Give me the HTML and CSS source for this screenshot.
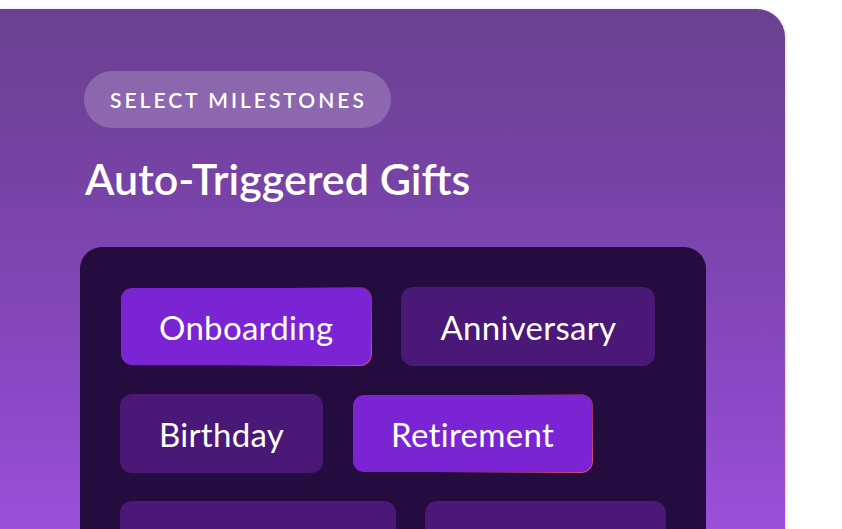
FILE: index.html
```html
<!DOCTYPE html>
<html lang="en">
<head>
<meta charset="utf-8">
<title>Auto-Triggered Gifts</title>
<link rel="stylesheet" href="styles.css">
</head>
<body>
<section class="card">
  <span class="eyebrow">SELECT MILESTONES</span>
  <h1 class="title">Auto-Triggered Gifts</h1>
  <div class="panel">
    <div class="chips">
      <button class="chip chip--on">Onboarding</button>
      <button class="chip">Anniversary</button>
    </div>
    <div class="chips">
      <button class="chip">Birthday</button>
      <button class="chip chip--on">Retirement</button>
    </div>
    <div class="chips">
      <button class="chip chip--w1" aria-label="Promotion"></button>
      <button class="chip chip--w2" aria-label="Wedding"></button>
    </div>
  </div>
</section>
</body>
</html>
```

FILE: styles.css
```css
html, body {
  margin: 0;
  padding: 0;
  background: #ffffff;
  height: 529px;
  overflow: hidden;
}

body {
  font-family: "Lato", "Open Sans", sans-serif;
}

.card {
  margin-top: 9px;
  width: 785px;
  box-sizing: border-box;
  padding: 62px 0 40px 84px;
  border-radius: 0 28px 0 0;
  background: linear-gradient(180deg, #6a4190 0px, #7743a6 180px, #8a49c4 380px, #9b4fda 520px);
  box-shadow: 1px 0 3px rgba(60, 20, 90, 0.15);
  display: flex;
  flex-direction: column;
  align-items: flex-start;
}

.eyebrow {
  flex-shrink: 0;
  display: inline-flex;
  align-items: center;
  height: 57px;
  padding: 0 24px 0 26px;
  border-radius: 29px;
  background: rgba(255, 255, 255, 0.2);
  color: #ffffff;
  font-size: 21px;
  font-weight: 600;
  letter-spacing: 3px;
}

.title {
  margin: 27px 0 0 1px;
  color: #ffffff;
  font-size: 43px;
  font-weight: 600;
  line-height: 48px;
}

.panel {
  margin: 44px 0 0 -4px;
  width: 626px;
  box-sizing: border-box;
  padding: 40px 40px 40px;
  background: #240c3f;
  border-radius: 22px 22px 0 0;
  display: flex;
  flex-direction: column;
  gap: 28px;
}

.chips {
  display: flex;
  gap: 29px;
}

.chip {
  box-sizing: border-box;
  height: 79px;
  padding: 0 38px;
  border: 1px solid transparent;
  border-radius: 12px;
  background: #4a1877;
  color: #ffffff;
  font-family: inherit;
  font-size: 33px;
  font-weight: 400;
  letter-spacing: 0.3px;
  cursor: pointer;
}

.chip--on {
  background:
    linear-gradient(#7b24d4, #7b24d4) padding-box,
    linear-gradient(135deg, rgba(123, 36, 212, 0) 50%, #e2507a 100%) border-box;
}

.chip--w1 { width: 276px; }
.chip--w2 { width: 241px; }
```
